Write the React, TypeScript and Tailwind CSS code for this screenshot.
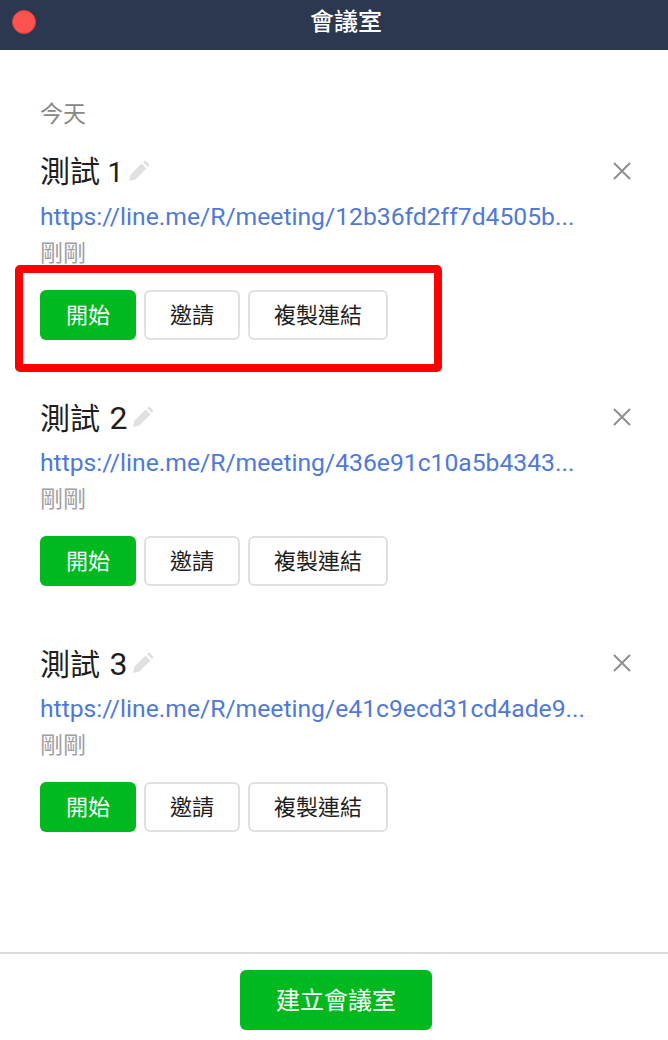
const CJK = "font-['Roboto','Noto_Sans_CJK_TC',sans-serif]";

function Pencil() {
  return (
    <svg width="22" height="22" viewBox="0 0 22 22" className="ml-[5px] mb-[2px]">
      <path d="M1 21 L2.6 14.6 L13.6 3.6 L18.4 8.4 L7.4 19.4 Z" fill="#e0e0e0" />
      <path d="M15 2.2 L16.4 0.9 Q17.2 0.2 18 0.9 L21 3.9 Q21.7 4.7 21 5.5 L19.8 7 Z" fill="#e0e0e0" />
    </svg>
  );
}

function Close() {
  return (
    <svg width="20" height="20" viewBox="0 0 20 20" className="mb-[3px]">
      <path d="M2 2 L18 18 M18 2 L2 18" stroke="#8f8f8f" strokeWidth="2" fill="none" />
    </svg>
  );
}

function Room({ n, url, digit }: { n: number; url: string; digit: string }) {
  return (
    <div className="h-[246px] pl-10 pr-[36px]">
      <div className="flex h-[44px] items-center justify-between">
        <div className="flex items-center text-[30px] leading-[44px] text-[#1e1e1e]">
          <span>測試 <span className={digit}>{n}</span></span>
          <Pencil />
        </div>
        <Close />
      </div>
      <div className="mt-[5px] h-[36px] w-[560px] truncate text-[24.7px] leading-[36px] text-[#4f79d6]">{url}</div>
      <div className="mt-[1px] h-[36px] text-[23px] leading-[36px] text-[#a0a0a0]">剛剛</div>
      <div className="mt-[18px] flex gap-2 text-[22px]">
        <button className="h-[50px] w-[96px] rounded-md bg-[#00b91e] pt-px text-white">開始</button>
        <button className="h-[50px] w-[96px] rounded-md border-2 border-[#e0e0e0] bg-white pt-px text-[#1e1e1e]">邀請</button>
        <button className="h-[50px] w-[140px] rounded-md border-2 border-[#e0e0e0] bg-white pt-px text-[#1e1e1e]">複製連結</button>
      </div>
    </div>
  );
}

export default function App() {
  return (
    <div className={`relative flex h-[1040px] w-[668px] flex-col overflow-hidden bg-white ${CJK}`}>
      <header className="relative flex h-[50px] shrink-0 items-start justify-center bg-[#2c384f] pl-[24px]">
        <span className="absolute left-3 top-[10px] h-6 w-6 rounded-full border border-[#d8403a] bg-[#fd5350]" />
        <span className="text-[24px] font-medium leading-[44px] text-white">會議室</span>
      </header>
      <main className="flex-1">
        <div className="pl-10 pt-[48px] text-[23px] leading-[34px] text-[#888888]">今天</div>
        <div className="mt-[18px]">
          <Room n={1} digit="text-[28px]" url="https://line.me/R/meeting/12b36fd2ff7d4505b..." />
          <Room n={2} digit="pl-[2px] text-[32px]" url="https://line.me/R/meeting/436e91c10a5b4343..." />
          <Room n={3} digit="pl-[2px] text-[32px]" url="https://line.me/R/meeting/e41c9ecd31cd4ade9..." />
        </div>
      </main>
      <footer className="flex h-[88px] shrink-0 items-start justify-center border-t-2 border-[#d9dbde] pl-1 pt-[16px]">
        <button className="h-[60px] w-[192px] rounded-md bg-[#00b91e] pt-[2px] text-[24px] text-white">建立會議室</button>
      </footer>
      <div className="absolute left-[15px] top-[265px] h-[107px] w-[427px] rounded-[5px] border-[8px] border-[#ff0000]" />
    </div>
  );
}
